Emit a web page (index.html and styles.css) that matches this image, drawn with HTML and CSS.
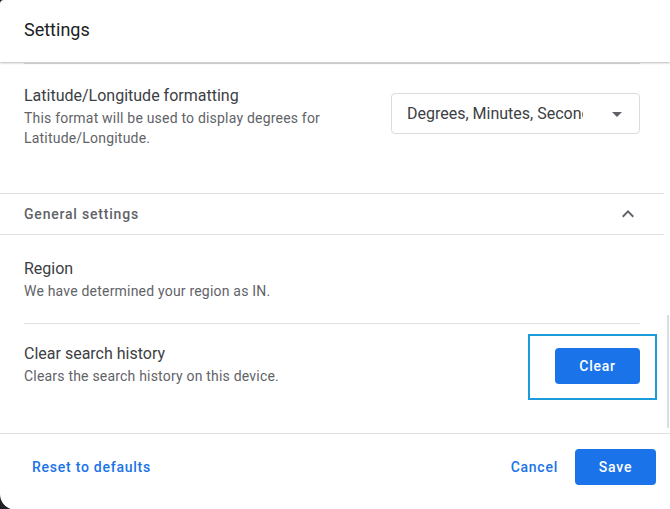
FILE: index.html
```html
<html>
<head>
<link rel="stylesheet" href="styles.css">
</head>
<body>
<div class="dialog">
    <div class="dialog-header">Settings</div>
    <div class="dialog-body">
        <div class="content">
            <div class="rule"></div>
            <div class="setting setting-lat">
                <div class="setting-text">
                    <div class="setting-title">Latitude/Longitude formatting</div>
                    <div class="setting-desc">This format will be used to display degrees for Latitude/Longitude.</div>
                </div>
                <div class="select">
                    <span class="select-value">Degrees, Minutes, Seconds</span>
                    <svg class="select-arrow" viewBox="0 0 24 24" width="24" height="24"><path d="M7 10l5 5 5-5z"/></svg>
                </div>
            </div>
            <div class="section-head">
                <span>General settings</span>
                <svg class="chevron" viewBox="0 0 24 24" width="24" height="24"><path d="M12 8l-6 6 1.41 1.41L12 10.83l4.59 4.58L18 14z"/></svg>
            </div>
            <div class="setting setting-region">
                <div class="setting-text">
                    <div class="setting-title">Region</div>
                    <div class="setting-desc">We have determined your region as IN.</div>
                </div>
            </div>
            <div class="rule"></div>
            <div class="setting setting-clear">
                <div class="setting-text">
                    <div class="setting-title">Clear search history</div>
                    <div class="setting-desc">Clears the search history on this device.</div>
                </div>
                <div class="btn-wrap">
                    <button class="btn btn-primary btn-clear">Clear</button>
                    <span class="focus-box"></span>
                </div>
            </div>
        </div>
        <div class="scroll-track"><div class="scroll-thumb"></div></div>
    </div>
    <div class="dialog-footer">
        <button class="btn btn-text">Reset to defaults</button>
        <div class="footer-actions">
            <button class="btn btn-text btn-cancel">Cancel</button>
            <button class="btn btn-primary btn-save">Save</button>
        </div>
    </div>
</div>
</body>
</html>
```

FILE: styles.css
```css
html, body {
    margin: 0;
    overflow: hidden;
    background: #202124;
    font-family: Roboto, "Liberation Sans", sans-serif;
}
.dialog {
    width: 670px;
    height: 510px;
    background: #fff;
    border-radius: 4px 0 0 16px;
    display: flex;
    flex-direction: column;
    overflow: hidden;
}
.dialog-header {
    height: 62px;
    box-sizing: border-box;
    padding: 0 24px 3px;
    display: flex;
    align-items: center;
    font-size: 18px;
    color: #202124;
    box-shadow: 0 1px 2px rgba(0,0,0,0.28);
    position: relative;
    z-index: 1;
}
.dialog-body {
    height: 371px;
    display: flex;
}
.content {
    flex: 1;
    padding-top: 1px;
}
.rule {
    height: 1px;
    margin: 0 24px;
    background: #e0e0e0;
}
.setting {
    display: flex;
    justify-content: space-between;
    align-items: flex-start;
    padding: 0 24px;
}
.setting-title {
    font-size: 16px;
    line-height: 24px;
    color: #3c4043;
}
.setting-desc {
    font-size: 14px;
    line-height: 20px;
    letter-spacing: 0.2px;
    color: #5f6368;
}
.setting-lat {
    padding-top: 20px;
    padding-bottom: 45px;
}
.setting-lat .setting-text {
    width: 330px;
}
.select {
    margin-top: 9px;
    width: 249px;
    height: 41px;
    box-sizing: border-box;
    border: 1px solid #dadce0;
    border-radius: 4px;
    padding-left: 15px;
    padding-right: 10px;
    display: flex;
    align-items: center;
}
.select-value {
    width: 176px;
    overflow: hidden;
    white-space: nowrap;
    font-size: 16px;
    color: #3c4043;
}
.select-arrow {
    margin-left: auto;
    fill: #5f6368;
}
.section-head {
    height: 42px;
    box-sizing: border-box;
    border-top: 1px solid #e0e0e0;
    border-bottom: 1px solid #e0e0e0;
    padding: 0 24px;
    display: flex;
    align-items: center;
    justify-content: space-between;
    font-size: 14px;
    font-weight: 500;
    letter-spacing: 0.8px;
    color: #5f6368;
}
.chevron {
    fill: #5f6368;
}
.setting-region {
    padding-top: 22px;
    padding-bottom: 22px;
}
.setting-clear {
    height: 109px;
    box-sizing: border-box;
    padding-top: 18px;
}
.btn-wrap {
    position: relative;
    margin-top: 6px;
}
.focus-box {
    position: absolute;
    top: -14px;
    bottom: -16px;
    left: -27px;
    right: -17px;
    border: 2px solid #1b9bd7;
}
.btn {
    font-family: Roboto, "Liberation Sans", sans-serif;
    font-size: 14px;
    font-weight: 500;
    letter-spacing: 0.75px;
    height: 36px;
    border: none;
    border-radius: 4px;
    padding: 0 8px;
    background: none;
    display: block;
}
.btn-primary {
    background: #1a73e8;
    color: #fff;
}
.btn-clear {
    width: 85px;
}
.btn-save {
    width: 81px;
}
.btn-text {
    color: #1a73e8;
}
.btn-cancel {
    margin-right: 9px;
}
.scroll-track {
    width: 6px;
    display: flex;
    flex-direction: column;
}
.scroll-thumb {
    margin-top: auto;
    margin-bottom: 5px;
    margin-left: 3px;
    width: 2px;
    height: 113px;
    background: #dadce0;
}
.dialog-footer {
    flex: 1;
    border-top: 1px solid #e0e0e0;
    padding: 15px 14px 0 24px;
    display: flex;
    justify-content: space-between;
    align-items: flex-start;
}
.footer-actions {
    display: flex;
}
```
